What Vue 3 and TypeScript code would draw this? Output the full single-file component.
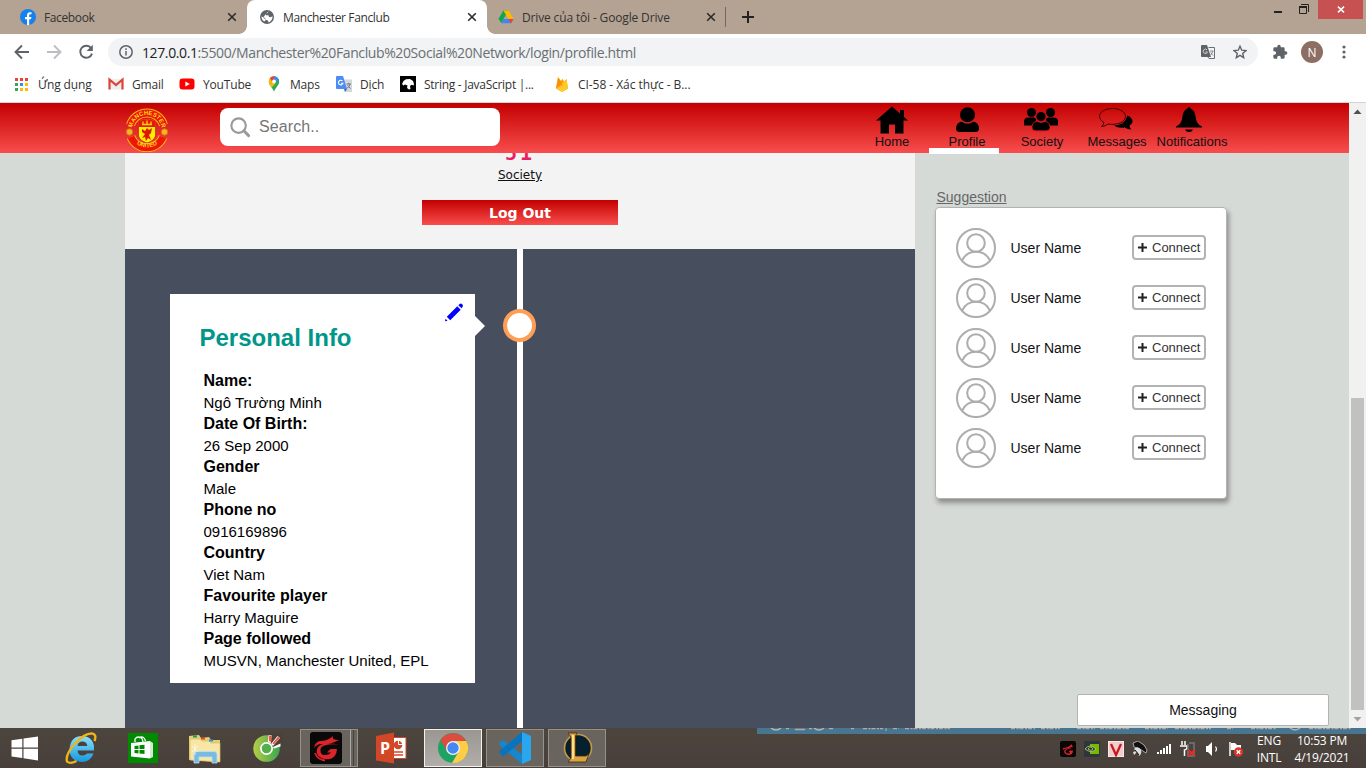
<script setup lang="ts">
interface Field { label: string; value: string }
interface NavItem { id: string; label: string }

const fields: Field[] = [
  { label: 'Name:', value: 'Ngô Trường Minh' },
  { label: 'Date Of Birth:', value: '26 Sep 2000' },
  { label: 'Gender', value: 'Male' },
  { label: 'Phone no', value: '0916169896' },
  { label: 'Country', value: 'Viet Nam' },
  { label: 'Favourite player', value: 'Harry Maguire' },
  { label: 'Page followed', value: 'MUSVN, Manchester United, EPL' },
]

const nav: NavItem[] = [
  { id: 'home', label: 'Home' },
  { id: 'profile', label: 'Profile' },
  { id: 'society', label: 'Society' },
  { id: 'messages', label: 'Messages' },
  { id: 'bell', label: 'Notifications' },
]

const suggestions: string[] = Array.from({ length: 5 }, () => 'User Name')
const appDots: string[] = ['#ea4335', '#ea4335', '#ea4335', '#34a853', '#4285f4', '#fbbc05', '#34a853', '#fbbc05', '#fbbc05']
</script>

<template>
  <div class="screen">
    <header class="tabs">
      <div class="tab first">
        <svg class="fav" viewBox="0 0 16 16"><circle cx="8" cy="8" r="8" fill="#1580f0" /><path d="M7 16V10.300H5V8H7V6.300C7 4.200 8.200 3.200 10 3.200L11.500 3.300V5.200H10.500C9.500 5.200 9.200 5.700 9.200 6.400V8H11.400L11 10.300H9.200V16Z" fill="#fff" /></svg>
        <span class="tab-title">Facebook</span>
        <svg class="close" viewBox="0 0 10 10"><path d="M1.200 1.200L8.800 8.800M8.800 1.200L1.200 8.800" /></svg>
      </div>
      <div class="tab active">
        <svg class="fav" viewBox="0 0 16 16"><circle cx="8" cy="8" r="7" fill="#5f6368" /><path d="M9.500 2.200L8.800 4L7 4.800V6.300H9.500L10 8H12L13.600 7.200C13.700 10.500 11.800 12.700 9.300 13.400V11.700L6.200 10.500V9L2.400 7.400C2.500 9.300 3.400 11.200 5 12.300L6.500 12L6 10L4 8.500Z" fill="#fff" /></svg>
        <span class="tab-title">Manchester Fanclub</span>
        <svg class="close" viewBox="0 0 10 10"><path d="M1.200 1.200L8.800 8.800M8.800 1.200L1.200 8.800" /></svg>
      </div>
      <div class="tab third">
        <svg class="fav" viewBox="0 0 16 16"><path d="M5.400 1.500H10.600L8 6L3.200 14L.5 9.800Z" fill="#10a64a" /><path d="M5.400 1.500H10.600L15.500 10H10.300Z" fill="#ffba00" /><path d="M3.200 14.300L5.600 10H15.500L12.900 14.300Z" fill="#4285f4" /><path d="M8 6L10.300 10H5.700Z" fill="#b4a392" /><path d="M12.900 14.300L10.500 10H15.500Z" fill="#ea4335" /></svg>
        <span class="tab-title">Drive của tôi - Google Drive</span>
        <svg class="close" viewBox="0 0 10 10"><path d="M1.200 1.200L8.800 8.800M8.800 1.200L1.200 8.800" /></svg>
      </div>
      <i class="tab-sep"></i>
      <svg class="plus-tab" viewBox="0 0 12 12"><path d="M6 0V12M0 6H12" stroke="#222" stroke-width="2" /></svg>
      <div class="win-controls">
        <svg class="min" viewBox="0 0 8 2"><path d="M0 1H8" stroke="#222" stroke-width="2" /></svg>
        <svg class="restore" viewBox="0 0 10 10"><path d="M2 .5H9.500V8M.5 2.500H7.500V9.500H.5Z" fill="none" stroke="#222" /><path d="M0 3H8" stroke="#222" stroke-width="2" /></svg>
        <span class="win-close"><svg viewBox="0 0 8 8"><path d="M.5 .8L7.500 7.200M7.500 .8L.5 7.200" stroke="#fff" stroke-width="1.800" /></svg></span>
      </div>
    </header>

    <div class="toolbar">
      <svg class="tb back" viewBox="0 0 16 16"><path d="M15 8H2M8 1.500L1.500 8L8 14.500" /></svg>
      <svg class="tb forward" viewBox="0 0 16 16"><path d="M1 8H14M8 1.500L14.500 8L8 14.500" /></svg>
      <svg class="tb reload" viewBox="0 0 16 16"><path d="M13.200 4.300A6 6 0 1 0 14 9.600" /><path d="M14.800 .8V7H8.600Z" fill="#5f6368" stroke="none" /></svg>
      <div class="omnibox">
        <svg class="info" viewBox="0 0 14 14"><circle cx="7" cy="7" r="6.200" fill="none" stroke="#5f6368" stroke-width="1.500" /><path d="M7 6V10.500M7 3.300V4.900" stroke="#5f6368" stroke-width="1.500" /></svg>
        <span class="url"><b>127.0.0.1</b>:5500/Manchester%20Fanclub%20Social%20Network/login/profile.html</span>
        <svg class="translate" viewBox="0 0 14 14"><path d="M1 0H6L10 12H1Q0 12 0 11V1Q0 0 1 0Z" fill="#5f6368" /><path d="M7.500 2.500H13.500V13.500H8L7 12" fill="none" stroke="#6b6f74" /><path d="M6 4.800A2.200 2.200 0 1 0 6.500 7H4.500" fill="none" stroke="#ccc" /><path d="M9 6H12.500M11.800 6Q11 9 9.500 10M9.700 7.500L12 10.500" fill="none" stroke="#777" stroke-width=".8" /></svg>
        <svg class="star" viewBox="0 0 14 14"><path d="M7 1.200L8.700 5.200L13 5.600L9.700 8.400L10.700 12.700L7 10.400L3.300 12.700L4.300 8.400L1 5.600L5.300 5.200Z" fill="none" stroke="#5f6368" stroke-width="1.400" /></svg>
      </div>
      <svg class="puzzle" viewBox="0 0 24 24"><path d="M20.500 11H19V7a2 2 0 0 0-2-2h-4V3.500a2.500 2.500 0 0 0-5 0V5H4a2 2 0 0 0-2 2v3.800h1.500a2.700 2.700 0 0 1 0 5.400H2V20a2 2 0 0 0 2 2h3.800v-1.500a2.700 2.700 0 0 1 5.400 0V22H17a2 2 0 0 0 2-2v-4h1.500a2.500 2.500 0 0 0 0-5z" fill="#5f6368" /></svg>
      <span class="account">N</span>
      <svg class="dots" viewBox="0 0 4 14"><circle cx="2" cy="2" r="1.600" /><circle cx="2" cy="7" r="1.600" /><circle cx="2" cy="12" r="1.600" /></svg>
    </div>

    <nav class="bookmarks">
      <div class="bm bm-apps"><span class="grid9"><i v-for="(c, i) in appDots" :key="i" :style="{ background: c }"></i></span><span class="t">Ứng dụng</span></div>
      <div class="bm bm-gmail"><svg viewBox="0 0 16 16" class="i16"><rect x="1" y="3" width="14" height="10.500" fill="#eee" /><path d="M1.500 13.500V3.500L8 9L14.500 3.500V13.500" fill="none" stroke="#db4437" stroke-width="2.200" /></svg><span class="t">Gmail</span></div>
      <div class="bm bm-yt"><svg viewBox="0 0 16 16" class="i16"><rect x=".5" y="2.500" width="15" height="11" rx="3" fill="#f00" /><path d="M6.300 5.500L10.800 8L6.300 10.500Z" fill="#fff" /></svg><span class="t">YouTube</span></div>
      <div class="bm bm-maps"><svg viewBox="0 0 16 16" class="i16"><path d="M8 15.800C7 12 2.800 9.500 2.800 5.500A5.200 5.200 0 0 1 13.200 5.500C13.200 9.500 9 12 8 15.800Z" fill="#34a853" /><path d="M3.500 8.500C2.300 5.500 2.800 3.500 4 2L7 5Z" fill="#fbbc04" /><path d="M4 2Q5.500 .2 8 .3L10 .7L6 5.500Z" fill="#ea4335" /><path d="M9 .4Q12 1 13 4L9.500 6.500L7 4Z" fill="#4285f4" /><path d="M3.500 8.500L7 5L9 8L5.500 11.500Z" fill="#fbbc04" /><circle cx="8" cy="5.500" r="1.900" fill="#fff" /></svg><span class="t">Maps</span></div>
      <div class="bm bm-tr"><svg viewBox="0 0 16 16" class="i16"><path d="M7 3.500H16V16H9Z" fill="#d5d7da" /><path d="M1 0H7L11 13H1Q0 13 0 12V1Q0 0 1 0Z" fill="#4d8bf5" /><path d="M6.500 5A2.300 2.300 0 1 0 7 7.200H5" fill="none" stroke="#fff" stroke-width="1.100" /><path d="M10.500 8H15M12.700 7V8M14 8Q13 11 11 12.500M11.500 9.500L14.500 12.500" fill="none" stroke="#6b7b84" /><path d="M8 13H11L9 16Z" fill="#3367d6" /></svg><span class="t">Dịch</span></div>
      <div class="bm bm-str"><svg viewBox="0 0 16 16" class="i16"><rect width="16" height="16" fill="#000" /><path d="M2 8L3.500 5L6 3.300L10 3L13 5L14 8L13.500 9.500L11.500 8.800L10 10L10.500 13L9 13.500L7 12L7.500 9.500L5 8.500L3.500 9.500Z" fill="#fff" /></svg><span class="t">String - JavaScript |...</span></div>
      <div class="bm bm-fb"><svg viewBox="0 0 16 16" class="i16"><path d="M2 12.500L4 1L7 5L8.300 2.800L10 5.500L12.500 3L14 12.500L8 16Z" fill="#ffa000" /><path d="M2 12.500L12.500 3.500L14 12.500L8 16Z" fill="#ffca28" /><path d="M2 12.500L4 1L9 9Z" fill="#f5820d" opacity=".55" /></svg><span class="t">CI-58 - Xác thực - B...</span></div>
    </nav>

    <div class="viewport">
      <div class="page">
        <div class="topbar">
          <svg class="crest" viewBox="0 0 44 44">
            <defs>
              <path id="arcTop" d="M8.200 27A14.800 14.800 0 1 1 35.800 27" />
              <path id="arcBottom" d="M4 26A18.800 18.800 0 0 0 40 26" />
            </defs>
            <path d="M5.500 17A17.300 17.300 0 0 1 38.500 17" fill="none" stroke="#f2b71b" stroke-width="9" />
            <path d="M5.500 17A17.300 17.300 0 0 1 38.500 17" fill="none" stroke="#f01505" stroke-width="7" />
            <path d="M6 29A17.300 17.300 0 0 0 38 29" fill="none" stroke="#f2b71b" stroke-width="9" />
            <path d="M6 29A17.300 17.300 0 0 0 38 29" fill="none" stroke="#f01505" stroke-width="7" />
            <path d="M13.500 13Q22 9 30.500 13V28Q29 33 22 35Q15 33 13.500 28Z" fill="#ffee00" stroke="#d6210f" stroke-width=".8" />
            <path d="M14 13Q22 9.500 30 13V19H14Z" fill="#e5190d" />
            <path d="M17 16.500H27M18 13.500V17M22 12.500V17M26 13.500V17" stroke="#ffd400" stroke-width="1.300" />
            <path d="M17 21L20 23L22 20L24 22L27 20L26 25L24 27L26 32L23 30L21 33L20 29L17 30L20 26L17 24Z" fill="#dc180c" />
            <circle cx="4.500" cy="24" r="3.300" fill="#f5b51c" stroke="#d86b12" />
            <circle cx="39.500" cy="24" r="3.300" fill="#f5b51c" stroke="#d86b12" />
            <text class="crest-text"><textPath href="#arcTop" startOffset="50%" text-anchor="middle">MANCHESTER</textPath></text>
            <text class="crest-text"><textPath href="#arcBottom" startOffset="50%" text-anchor="middle">UNITED</textPath></text>
          </svg>
          <label class="search">
            <svg viewBox="0 0 22 22"><circle cx="9" cy="9" r="7.600" fill="none" stroke="#999" stroke-width="2.200" /><path d="M14.500 14.500L19.500 19.500" stroke="#999" stroke-width="3" stroke-linecap="round" /></svg>
            <span>Search..</span>
          </label>
          <div class="menu">
            <div v-for="n in nav" :key="n.id" class="menu-item" :class="{ current: n.id === 'profile' }">
              <svg v-if="n.id === 'home'" viewBox="0 0 36 28"><path d="M18 .5L26 7.500V4H30V11L34 14.500H29.500V27.500H21V18.500H15V27.500H6.500V14.500H2Z" /></svg>
              <svg v-else-if="n.id === 'profile'" viewBox="0 0 36 28"><circle cx="18.500" cy="8.700" r="7.500" /><path d="M12.500 15.500Q18.500 20 24.500 15.500Q30 17 30 22.500Q30 26 26 26H11Q7 26 7 22.500Q7 17 12.500 15.500Z" /></svg>
              <svg v-else-if="n.id === 'society'" viewBox="2 0 36 28"><circle cx="9.500" cy="6.500" r="4.500" /><circle cx="28.500" cy="6.500" r="4.500" /><path d="M2 19.500V15.500Q2 11.500 6.500 11.500H12Q16 13 13 16L10 19.500ZM36 19.500V15.500Q36 11.500 31.500 11.500H26Q22 13 25 16L28 19.500Z" /><circle cx="19" cy="10.500" r="5" stroke="#d41414" stroke-width=".8" /><path d="M10 21.500Q10 16 15 15.200Q19 18 23 15.200Q28 16 28 21.500Q28 24.800 24 24.800H14Q10 24.800 10 21.500Z" stroke="#d41414" stroke-width=".8" /></svg>
              <svg v-else-if="n.id === 'messages'" viewBox="2 0 36 28"><path d="M30.500 9.500Q36 12 35.500 16Q35 18 32.500 19.500Q32.500 21.500 34.500 23.500Q30.500 23.500 27.500 21.500Q21 22.500 17 19.500Q28 19 30.500 9.500Z" /><path d="M15.500 2.500C8 2.500 2.500 6 2.500 10.300C2.500 13 4.200 15 7 16.400Q6.800 18.500 4.500 20.500Q8.500 20.300 11 18C20.500 19.500 28.500 16 28.500 10.300C28.500 6 23 2.500 15.500 2.500Z" fill="none" stroke="#400" stroke-width="1" /></svg>
              <svg v-else viewBox="1 0 36 28"><path d="M16 1A1.500 1.500 0 0 1 17.500 2.500Q22 4.500 22.500 10Q23 18 29 20.500V21.500H3V20.500Q9 18 9.500 10Q10 4.500 14.500 2.500A1.500 1.500 0 0 1 16 1Z" /><path d="M12 23.500H20Q19 26 16 26Q13 26 12 23.500Z" /></svg>
              <span>{{ n.label }}</span>
            </div>
          </div>
        </div>

        <div class="content">
          <main class="main-col">
            <section class="summary">
              <div class="count">51</div>
              <a class="society-link">Society</a>
              <button class="logout">Log Out</button>
            </section>
            <section class="timeline">
              <article class="info-card">
                <svg class="pencil" viewBox="0 0 20 20"><path d="M2.800 14.800L13.300 4.300L16.700 7.700L6.200 18.200ZM14.300 3.200L15.700 1.900Q17 .9 18.300 2.200Q19.600 3.700 18.500 5L17.500 6.300ZM1.500 16.700L3.600 18.700L1 19.200Z" fill="#00f" /></svg>
                <h2>Personal Info</h2>
                <dl>
                  <template v-for="f in fields" :key="f.label">
                    <dt>{{ f.label }}</dt>
                    <dd>{{ f.value }}</dd>
                  </template>
                </dl>
              </article>
              <i class="spine"></i>
              <i class="knob"></i>
            </section>
          </main>

          <aside class="side">
            <div class="side-title">Suggestion</div>
            <div class="suggest-card">
              <div v-for="(s, i) in suggestions" :key="i" class="suggest-row">
                <svg class="avatar" viewBox="0 0 40 40"><circle cx="20" cy="20" r="19" /><circle cx="20" cy="15" r="8.800" /><path d="M6 32.800Q10 23.800 20 23.800Q30 23.800 34 32.800" /></svg>
                <span class="uname">{{ s }}</span>
                <button class="connect"><svg viewBox="0 0 9 9"><path d="M4.500 0V9M0 4.500H9" stroke="#222" stroke-width="2" /></svg>Connect</button>
              </div>
            </div>
          </aside>
        </div>
        <div class="messaging">Messaging</div>
      </div>
      <div class="scrollbar">
        <svg class="arrow" viewBox="0 0 17 17"><path d="M4.500 11L8.500 6.500L12.500 11Z" fill="#505050" /></svg>
        <i class="thumb"></i>
        <svg class="arrow" viewBox="0 0 17 17"><path d="M4.500 6L12.500 6L8.500 10.500Z" fill="#a3a3a3" /></svg>
      </div>
    </div>

    <footer class="taskbar">
      <div class="behind"><svg viewBox="0 0 609 6"><path d="M14 0Q19 4 24 0M57 0Q62 4 67 0" stroke="#b9b3b0" stroke-width="1.500" fill="none" /><path d="M38 1.500H48M29 .5H32M52 .5H55M72 .5H76M94 .5H97" stroke="#b9a9a3" stroke-width="1.400" /><path d="M106 .6H126M136 .6H142M148 .6H193M254 .6H278M284 .6H303M320 .6H338M343 .6H372M388 .6H411M418 .6H454M470 .6H476M494 .6H519M552 .6H594" stroke="#b5a9a5" stroke-width="1.300" stroke-dasharray="4 1.500 2 1" /><path d="M129 0V3" stroke="#b9a9a3" /><path d="M533 0Q538 4 543 0" fill="none" stroke="#b5b5b5" stroke-width="1.300" /></svg></div>
      <div class="task"><svg viewBox="0 0 40 40"><path d="M6.500 12.300L17.300 10.800V19.500H6.500ZM18.500 10.600L33 8.500V19.500H18.500ZM6.500 20.700H17.300V30L6.500 28.500ZM18.500 20.700H33V32.500L18.500 30.200Z" fill="#fff" /></svg></div>
      <div class="task"><svg viewBox="0 0 40 40"><defs><linearGradient id="ieg" x2="0" y2="1"><stop stop-color="#8be0ff" /><stop offset="1" stop-color="#1798dc" /></linearGradient></defs><path d="M33 22.500H16.500Q17 27.500 21.500 27.500Q24.500 27.500 26 25.500H32.500Q29.500 34 20.800 34Q8.500 33 8.500 21Q9.500 8 21.500 8Q34 9 33 22.500ZM16.500 18H26.300Q26 13.500 21.300 13.500Q17 13.500 16.500 18Z" fill="url(#ieg)" /><path d="M33.500 13Q36 6 31 5.500Q24 5 14 15.500Q4 27 6 33.500Q9 36.500 15.500 33" fill="none" stroke="#efb419" stroke-width="2.400" /></svg></div>
      <div class="task"><svg viewBox="0 0 40 40"><rect x="5" y="5" width="30" height="30" fill="#008a00" /><path d="M8 15L27 13V30.500L8 28.500Z" fill="#fff" /><path d="M27 13L30 15V29L27 30.500Z" fill="#d5e8d5" /><path d="M12 14V11Q14 8 18 9.500Q20 11 20 14M16 10Q21 7 22.500 13" fill="none" stroke="#fff" stroke-width="1.300" /><path d="M11.500 18L15.500 17.500V21H11.500ZM16.500 17.300L21.500 16.800V21H16.500ZM11.500 22H15.500V25.500L11.500 25ZM16.500 22H21.500V26L16.500 25.600Z" fill="#008a00" /></svg></div>
      <div class="task"><svg viewBox="0 0 40 40"><path d="M4 8L14 7L16 10L24 9L26 12H35V34L4 32Z" fill="#e8cd77" /><path d="M5 11H15L17 13H24L26 15H35V34L5 32Z" fill="#f7e6a5" stroke="#d9bc65" stroke-width=".7" /><path d="M8 8.500H12" stroke="#17a24b" stroke-width="2" /><path d="M16 10.500H20" stroke="#d94a2a" stroke-width="2" /><path d="M24 12.500H28" stroke="#2397df" stroke-width="2" /><path d="M9 35V26Q9 23.500 12 23.500H29Q32 23.500 32 26V35H27V29H14V35Z" fill="#79bae0" stroke="#b8e1f4" stroke-width=".8" /><path d="M7 18L13 24M13 18L7 24M10 16V27" stroke="#fff" opacity=".7" /></svg></div>
      <div class="task"><svg viewBox="0 0 40 40"><defs><linearGradient id="ccg" x2="1"><stop stop-color="#b5ce48" /><stop offset="1" stop-color="#3aa64e" /></linearGradient></defs><circle cx="19.500" cy="20.500" r="13.300" fill="url(#ccg)" /><path d="M21 6L35 5L34.500 17.500L25 19Z" fill="#4a413b" /><circle cx="19.500" cy="20.500" r="6.500" fill="#fff" /><circle cx="19.500" cy="20.500" r="4.800" fill="#55ad4c" /><path d="M21 14L21 7.500L24.500 7L24 15ZM24 16L30.500 8L33 10L26 18ZM26 19L33.500 15.500V18.500L27 20.500Z" fill="#fff" /><path d="M22 13L21.500 8L24.500 7.500L24 14ZM25.500 15.500L31 8.500L32.800 10L27 16.500Z" fill="#f05a3c" /></svg></div>
      <div class="task run stacked"><svg viewBox="0 0 40 40"><rect x="4" y="4" width="32" height="32" rx="3" fill="#090909" /><path d="M14 13Q22 13 27 8Q25 12 33 12Q24 17 15 16Q11 16 8 20Q9 14 14 13Z" fill="#dd2529" /><path d="M33 16.500Q16 15.500 14.500 21Q14 27 18.500 27Q23 27 25 24.500H21L24.500 21H31Q30.500 29 24 31Q17 32.500 12 27.500Q9 22 13 18Q18 14 33 16.500Z" fill="#dd2529" /><path d="M9 25Q12 32 19 32.500" stroke="#dd2529" stroke-width="1.800" fill="none" /></svg></div>
      <div class="task"><svg viewBox="0 0 40 40"><path d="M22 9.500H35V30.500H22Z" fill="#fff" stroke="#d24726" /><path d="M23 14H31V22H23Z" fill="#fff" /><circle cx="27" cy="17" r="4.300" fill="#d24726" /><path d="M27.500 12V16.500H32" stroke="#fff" fill="none" /><path d="M23 24H32M23 27H32" stroke="#d24726" stroke-width="1.500" /><path d="M5 8L23 4.500V35.500L5 32.500Z" fill="#d24726" /><text x="9" y="26" class="pp">P</text></svg></div>
      <div class="task run focus"><svg viewBox="0 0 40 40"><circle cx="20" cy="20" r="15" fill="#1da462" /><path d="M20 13H33.300A15 15 0 0 1 19 35L26 23Z" fill="#fccd45" /><path d="M7.500 12L13.500 22.500L19 20L20 13H33.300A15 15 0 0 0 7.500 12Z" fill="#dc4c3f" /><circle cx="20" cy="20" r="7" fill="#f3f3f3" /><circle cx="20" cy="20" r="5.700" fill="#4688f1" /></svg></div>
      <div class="task run"><svg viewBox="0 0 40 40"><path d="M27 4L36 8V32L27 36Z" fill="#29a6f0" /><path d="M4.500 14.500L8 12L27 26.500V36L4.500 17Z" fill="#1487cf" /><path d="M4.500 25.500L8 28.500L27 13.500V4L4.500 23Z" fill="#0974bd" /></svg></div>
      <div class="task run"><svg viewBox="0 0 40 40"><circle cx="21" cy="20" r="13.500" fill="#06202e" stroke="#c69a45" stroke-width="1.600" /><path d="M11 5H20L18.500 8V28H29L32 26L29 34H11L14 30V9Z" fill="#d9a441" stroke="#41290d" stroke-width=".8" /><path d="M15 7H17V31H15Z" fill="#ffe08a" /></svg></div>

      <div class="tray">
        <svg viewBox="0 0 16 16"><rect width="16" height="16" rx="2" fill="#0a0606" /><path d="M3 7Q8 7 12 3Q11 5 14 5Q10 7 6 7.500Q3 8 3 9ZM13 7.800Q6 7 5.500 10.500Q6 13 9.500 12.200L10 11H8.500L10 9.500H13Q13 14 8 14Q3 12.500 4.500 9Q7 6.500 13 7.800Z" fill="#e02227" /></svg>
        <svg viewBox="0 0 16 16"><rect width="16" height="16" rx="1" fill="#2e353d" /><path d="M6 3H15V13H6Z" fill="#76b900" /><path d="M1 8Q6 2 12 8Q7 13 1 8ZM4 8Q7 4 9 8Q7 11 4 8" fill="#2e353d" stroke="#b4dc69" stroke-width=".8" /></svg>
        <svg viewBox="0 0 16 16"><rect width="16" height="16" fill="#f3cdcd" stroke="#fff" /><path d="M3 3L8 14L13 3" fill="none" stroke="#c51b1b" stroke-width="2.300" /></svg>
        <svg viewBox="0 0 16 16"><path d="M1 2L6 0L12 4L15 9L14 12L8 8L2 6Z" fill="#111" stroke="#ddd" stroke-width=".7" /><path d="M2 8Q6 4 9 9Q10 13 7 15L5 11L2 14L1 11L4 10Z" fill="#ddd" /><path d="M3 9L7 14" stroke="#111" /></svg>
        <svg viewBox="0 0 16 16"><path d="M2 11V13M5 9V13M8 7V13M11 5V13M14 3V13" stroke="#fff" stroke-width="2" /></svg>
        <svg viewBox="0 0 16 16"><path d="M2 0V4M5 0V4M0 5H7V7Q6 9 4.500 9V15" fill="none" stroke="#fff" stroke-width="1.500" /><path d="M9 2H14V15H8V3" fill="none" stroke="#777" stroke-width="1.500" /><path d="M8 9L15 15M15 9L8 15" stroke="#e52d25" stroke-width="2" /></svg>
        <svg viewBox="0 0 16 16"><path d="M2 5H4L8 1V15L4 11H2Z" fill="#fff" /><path d="M11.500 5.500Q13.500 8 11.500 10.500" fill="none" stroke="#fff" stroke-width="1.200" /></svg>
        <svg viewBox="0 0 16 16"><path d="M2 1V15" stroke="#fff" stroke-width="1.500" /><path d="M3 2H7L9 4H13V10H8L6 9H3Z" fill="#fff" /><circle cx="10.500" cy="11" r="4.700" fill="#d9362b" /><path d="M8.700 9.200L12.300 12.800M12.300 9.200L8.700 12.800" stroke="#fff" stroke-width="1.400" /></svg>
      </div>
      <div class="lang"><span>ENG</span><span>INTL</span></div>
      <div class="clock"><span>10:53 PM</span><span>4/19/2021</span></div>
    </footer>
  </div>
</template>

<style>
html, body { margin: 0; overflow: hidden; }
</style>

<style scoped>
.screen { width: 1366px; height: 768px; display: flex; flex-direction: column; overflow: hidden; font-family: "Open Sans", "Noto Sans", sans-serif; font-size: 12px; color: #333; background: #fff; }
svg { display: block; flex: none; }
.screen * { box-sizing: border-box; }

.tabs { height: 34px; background: #b4a392; display: flex; align-items: stretch; flex: none; }
.tab { width: 240px; display: flex; align-items: center; position: relative; flex: none; }
.tab.first { width: 247px; padding-left: 20px; }
.tab.active { background: #fff; border-radius: 8px 8px 0 0; padding-left: 12px; }
.tab.active::before, .tab.active::after { content: ""; position: absolute; bottom: 0; width: 8px; height: 8px; }
.tab.active::before { left: -8px; background: radial-gradient(circle at 0 0, #b4a392 7.500px, #fff 8px); }
.tab.active::after { right: -8px; background: radial-gradient(circle at 100% 0, #b4a392 7.500px, #fff 8px); }
.tab.third { width: 239px; padding-left: 11px; }
.fav { width: 16px; height: 16px; margin-right: 8px; }
.tab-title { flex: 1; white-space: nowrap; letter-spacing: -.37px; }
.tab.third .tab-title { letter-spacing: -.15px; }
.close { width: 10px; height: 10px; margin-right: 10px; }
.close path { stroke: #2b2b2b; stroke-width: 1.600; }
.tab-sep { width: 1px; height: 20px; margin: 7px 0 0 -1px; background: #75695f; }
.plus-tab { width: 12px; height: 12px; margin: 11px 0 0 16px; }
.win-controls { margin-left: auto; display: flex; padding-right: 3px; }
.min { width: 8px; height: 2px; margin: 11px 17px 0 0; }
.restore { width: 10px; height: 10px; margin: 4px 9px 0 0; }
.win-close { width: 45px; height: 19px; background: #c75050; display: flex; align-items: center; justify-content: center; }
.win-close svg { width: 8px; height: 7px; }

.toolbar { height: 36px; flex: none; display: flex; align-items: center; padding: 0 20px 0 14px; }
.tb { width: 16px; height: 16px; fill: none; stroke: #5f6368; stroke-width: 1.900; margin-right: 16px; }
.tb.forward { stroke: #bcbec1; }
.tb.reload { margin-right: 14px; }
.omnibox { width: 1150px; height: 28px; border-radius: 14px; background: #f1f3f4; display: flex; align-items: center; padding: 0 11px; flex: none; }
.info { width: 14px; height: 14px; margin-right: 9px; }
.url { font-size: 14px; color: #6b6f73; flex: 1; white-space: nowrap; letter-spacing: -.39px; }
.url b { font-weight: 400; color: #222; }
.translate { width: 14px; height: 14px; margin-right: 18px; }
.star { width: 14px; height: 14px; }
.puzzle { width: 16px; height: 16px; margin-left: 14px; }
.account { width: 22px; height: 22px; border-radius: 50%; background: #8d6e63; color: #fff; display: flex; align-items: center; justify-content: center; margin-left: 13px; }
.dots { width: 4px; height: 14px; margin-left: auto; fill: #5f6368; }

.bookmarks { height: 33px; flex: none; display: flex; align-items: center; padding: 0 0 4px 14px; border-bottom: 1px solid #d3d4d8; }
.bm { display: flex; align-items: center; white-space: nowrap; }
.bm .t { letter-spacing: -.17px; }
.i16 { width: 16px; height: 16px; margin-right: 8px; }
.grid9 { display: grid; grid-template-columns: repeat(3, 3px); gap: 2px; margin-right: 10px; margin-left: 1px; }
.grid9 i { width: 3px; height: 3px; }
.bm-apps { width: 94px; }
.bm-gmail { width: 71px; }
.bm-yt { width: 87px; }
.bm-maps { width: 70px; }
.bm-tr { width: 64px; }
.bm-str { width: 154px; }
.bm-str .t { letter-spacing: -.28px; }
.bm-fb .t { letter-spacing: -.05px; }

.viewport { height: 625px; flex: none; display: flex; overflow: hidden; }
.page { width: 1349px; height: 625px; position: relative; background: #d6dad6; font-family: "Liberation Sans", Arial, sans-serif; color: #111; overflow: hidden; }
.topbar { height: 50px; background: linear-gradient(#c40000, #f84d4d); display: flex; position: relative; z-index: 2; padding-left: 125px; }
.crest { width: 44px; height: 44px; margin-top: 5px; }
.crest-text { font: bold 6px "Liberation Sans", sans-serif; fill: #ffd51c; }
.search { width: 280px; height: 38px; border-radius: 8px; background: #fff; margin: 5px 0 0 51px; padding-left: 10px; display: flex; align-items: center; font-size: 16px; color: #757575; letter-spacing: .1px; }
.search svg { width: 21px; height: 21px; margin-right: 8px; }
.menu { display: flex; margin-left: 354px; }
.menu-item { width: 75px; height: 51px; display: flex; flex-direction: column; align-items: center; font-size: 13px; line-height: 15px; padding-top: 3px; position: relative; }
.menu-item span { padding-left: 1px; }
.menu-item svg { width: 36px; height: 28px; }
.menu-item.current::after { content: ""; position: absolute; left: 0; bottom: 0; width: 70px; height: 6px; background: #fff; z-index: -1; }

.content { display: flex; height: 575px; padding-left: 125px; }
.main-col { width: 790px; display: flex; flex-direction: column; }
.summary { height: 96px; background: #f3f3f3; flex: none; display: flex; flex-direction: column; align-items: center; font-family: Verdana, "DejaVu Sans", sans-serif; }
.count { font: bold 20px/24px "DejaVu Sans Mono", monospace; color: #e91e63; margin-top: -12px; letter-spacing: 3px; }
.society-link { font-size: 12px; line-height: 15px; margin-top: 3px; text-decoration: underline; }
.logout { width: 196px; height: 25px; border: 0; padding: 0; background: linear-gradient(#c40000, #f84d4d); color: #fff; font: bold 14px "DejaVu Sans", sans-serif; margin-top: 17px; }
.timeline { flex: 1; background: #474e5d; position: relative; padding: 45px 0 0 45px; }
.spine { position: absolute; left: 392px; top: 0; bottom: 0; width: 6px; background: #fff; }
.knob { position: absolute; left: 378px; top: 60px; width: 33px; height: 33px; border-radius: 50%; border: 4px solid #ff9f55; background: #fff; }
.info-card { width: 305px; height: 389px; background: #fff; position: relative; padding: 30px 0 0 29.500px; }
.info-card::after { content: ""; position: absolute; right: -10px; top: 22px; border: 10px solid transparent; border-right: 0; border-left-color: #fff; }
.pencil { position: absolute; right: 11px; top: 8px; width: 20px; height: 20px; }
h2 { margin: 0; font-size: 24px; line-height: 28px; color: #009688; }
dl { margin: 18px 0 0 4px; color: #000; }
dt { font-weight: bold; font-size: 16px; line-height: 22px; height: 22px; }
dd { margin: 0; font-size: 15px; line-height: 21px; height: 21px; }

.side { padding: 35px 0 0 20px; }
.side-title { font-size: 14px; line-height: 19px; color: #666; text-decoration: underline; padding-left: 1.500px; }
.suggest-card { width: 292px; height: 292px; border: 1px solid #b3b3b3; border-radius: 4px; background: #fff; box-shadow: 2px 4px 5px rgba(0, 0, 0, .35); padding: 15px 20px; }
.suggest-row { height: 50px; display: flex; align-items: center; }
.avatar { width: 40px; height: 40px; fill: none; stroke: #adadad; stroke-width: 2; }
.uname { font-size: 14px; margin-left: 14.500px; flex: 1; }
.connect { width: 74px; height: 25px; border: 2px solid #b3b3b3; border-radius: 4px; background: #fff; margin: 0 0 1px; padding: 0 0 0 4px; display: flex; align-items: center; font: 13px "Liberation Sans", Arial, sans-serif; color: #333; }
.connect svg { width: 9px; height: 9px; margin-right: 5px; }
.messaging { position: absolute; left: 1077px; top: 591px; width: 252px; height: 32px; border: 1px solid #b3b3b3; border-radius: 2px; background: #fff; font-size: 14px; display: flex; align-items: center; justify-content: center; }
.scrollbar { width: 17px; background: #f1f1f1; display: flex; flex-direction: column; justify-content: space-between; align-items: center; }
.arrow { width: 17px; height: 17px; }
.thumb { width: 13px; height: 312px; background: #c1c1c1; margin: auto 0 1px; }

.taskbar { height: 40px; flex: none; background: linear-gradient(#4c453d, #483f3b); display: flex; position: relative; padding-left: 0; color: #fff; }
.behind { position: absolute; right: 0; top: 0; width: 609px; height: 6px; background: #48758f; }
.behind svg { width: 609px; height: 6px; }
.task { width: 58px; height: 38px; margin: 1px 4px 0 0; display: flex; align-items: center; justify-content: center; flex: none; border: 1px solid transparent; }
.task svg { width: 40px; height: 40px; }
.task:nth-child(2) { width: 50px; margin-right: 2px; }
.task.run { background: #6a645f; border-color: #96918c; }
.task.focus { background: linear-gradient(#9a9793, #b1aeaa); border: 1px solid #f2f2f2; }
.task.stacked { padding-right: 6px; position: relative; }
.task.stacked::after { content: ""; position: absolute; right: 3px; top: 0; width: 2px; height: 36px; border-left: 1px solid #aaa; border-right: 1px solid #48413b; }
.pp { font: bold 16px "Open Sans", sans-serif; fill: #fff; }
.tray { margin-left: auto; display: flex; gap: 8px; align-items: center; padding-top: 2px; }
.tray svg { width: 16px; height: 16px; }
.lang, .clock { display: flex; flex-direction: column; align-items: center; line-height: 17px; padding-top: 4px; letter-spacing: -.2px; white-space: nowrap; }
.lang { width: 50px; }
.clock { width: 72px; margin-left: -8px; margin-right: 8px; }
</style>
